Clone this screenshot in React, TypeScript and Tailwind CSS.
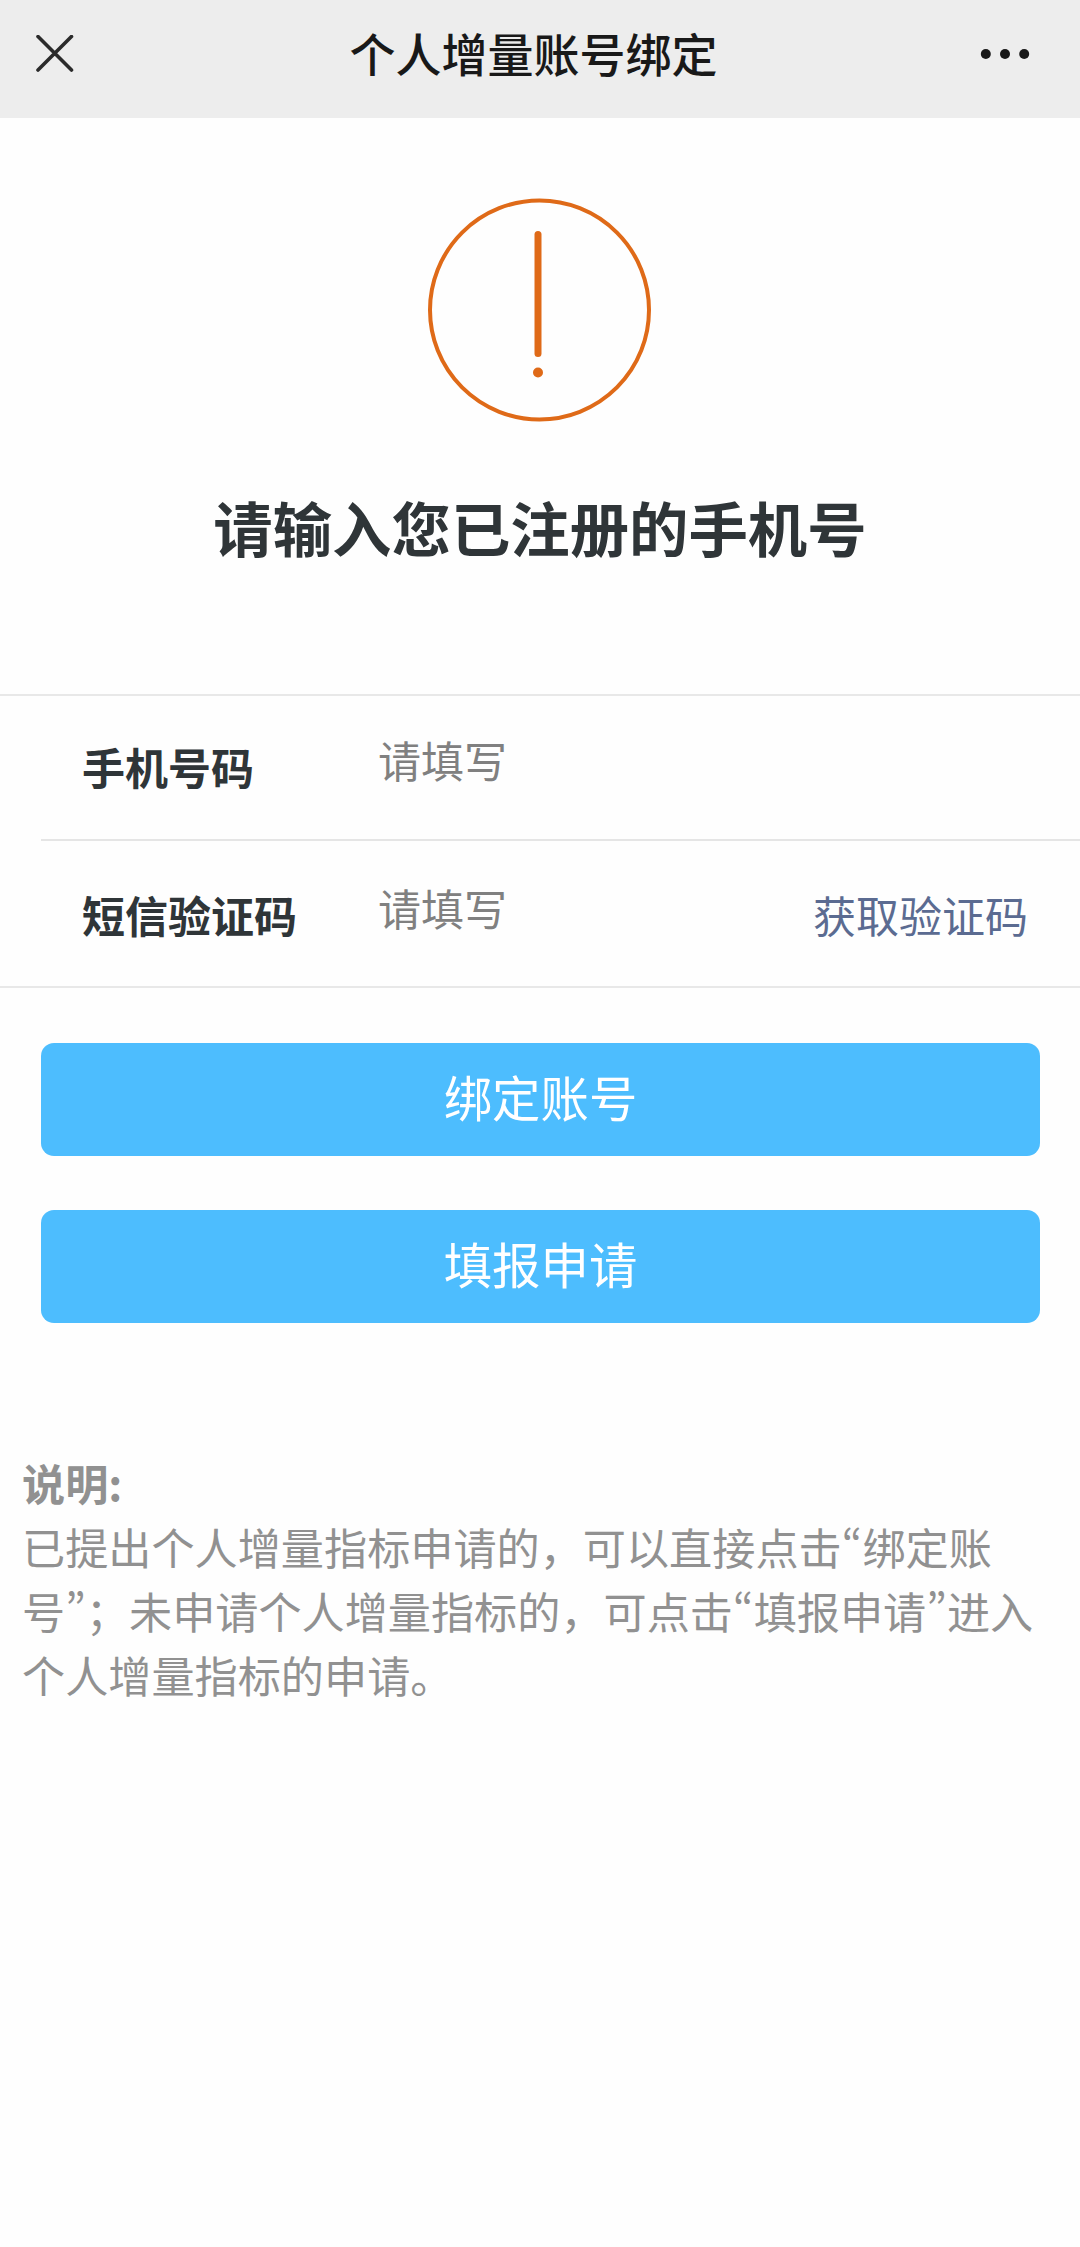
import type { ReactNode } from 'react'

const FIELDS: { label: string; action?: string }[] = [
  { label: '手机号码' },
  { label: '短信验证码', action: '获取验证码' },
]

const ACTIONS = ['绑定账号', '填报申请']

// proportional width quotes, the CJK default is a full em
function Quote({ children }: { children: ReactNode }) {
  return (
    <span className="inline-flex w-[20.7px] justify-center leading-none [font-feature-settings:'pwid']">{children}</span>
  )
}

function NavBar() {
  return (
    <header className="flex h-[118px] items-center justify-between bg-[#ededed] pb-[10px] pl-9 pr-[50px]">
      <button type="button" aria-label="关闭">
        <svg className="h-[38px] w-[38px]" viewBox="0 0 38 38" fill="none" stroke="#2b2b2b" strokeWidth={3.6} strokeLinecap="round">
          <path d="M2 1.5L35.5 35M35.5 1.5L2 35" />
        </svg>
      </button>
      <h1 className="pb-[5px] pl-[13px] text-[46px] font-medium leading-none text-[#191919]">个人增量账号绑定</h1>
      <button type="button" aria-label="更多">
        <svg className="mb-px h-3 w-[50px]" viewBox="0 0 50 12" fill="#191919">
          <circle cx="5.8" cy="6" r="5" />
          <circle cx="25" cy="6" r="5" />
          <circle cx="44.2" cy="6" r="5" />
        </svg>
      </button>
    </header>
  )
}

export default function App() {
  return (
    <div lang="zh-CN" className="h-[2247px] w-[1080px] overflow-hidden bg-[#fefefe] font-['Noto_Sans_CJK_SC',sans-serif]">
      <NavBar />

      {/* Warning icon and title */}
      <section className="flex flex-col items-center pt-[80px]">
        <svg className="mr-[2px] h-[224px] w-[224px]" viewBox="0 0 224 224" fill="none" stroke="#df6a18">
          <circle cx="112.5" cy="112" r="109.5" strokeWidth={4} />
          <path d="M111 36.5v119" strokeWidth={7} strokeLinecap="round" />
          <circle cx="111" cy="174.5" r="5" fill="#df6a18" stroke="none" />
        </svg>
        <h2 className="mt-[74px] text-[59.4px] font-bold leading-[60px] text-[#2f3538]">请输入您已注册的手机号</h2>
      </section>

      {/* Form */}
      <form className="mt-[138px] border-y-2 border-[#e8e8e8]">
        {FIELDS.map(({ label, action }, i) => (
          <div
            key={label}
            className={[
              'ml-[41px] flex items-center pl-[41px] pr-[52px] text-[43px] leading-[60px]',
              i > 0 ? 'h-[147px] border-t-2 border-[#e5e5e5]' : 'h-[143px] pb-[4px]',
            ].join(' ')}
          >
            <label className="w-[296px] font-bold text-[#2f3538]">{label}</label>
            <input
              type="text"
              placeholder="请填写"
              className="mb-[14px] h-[60px] min-w-0 flex-1 bg-transparent outline-none placeholder:text-[#808080]"
            />
            {action && <button type="button" className="shrink-0 text-[#5b6b91]">{action}</button>}
          </div>
        ))}
      </form>

      <div className="mt-[55px] flex flex-col gap-[54px] pl-[41px] pr-10">
        {ACTIONS.map((text) => (
          <button key={text} type="button" className="h-[113px] rounded-[13px] bg-[#4dbdfe] pb-[6px] text-[48.4px] text-white">
            {text}
          </button>
        ))}
      </div>

      {/* Notes */}
      <section className="mt-[127px] whitespace-nowrap pl-[22px] text-[43.15px] leading-[64px] text-[#919191]">
        <h3 className="font-bold">说明:</h3>
        <p>
          已提出个人增量指标申请的，可以直接点击<Quote>“</Quote>绑定账
          <br />
          号<Quote>”</Quote>；未申请个人增量指标的，可点击<Quote>“</Quote>填报申请<Quote>”</Quote>进入
          <br />
          个人增量指标的申请。
        </p>
      </section>
    </div>
  )
}
